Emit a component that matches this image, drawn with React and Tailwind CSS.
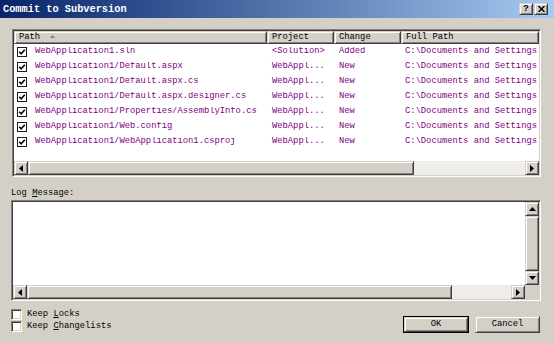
import React from "react";

const raised =
  "border border-t-[#d4d0c8] border-l-[#d4d0c8] border-r-[#404040] border-b-[#404040] shadow-[inset_1px_1px_#ffffff,inset_-1px_-1px_#808080] bg-[#d4d0c8]";
const sunken =
  "border border-t-[#808080] border-l-[#808080] border-r-[#ffffff] border-b-[#ffffff] shadow-[inset_1px_1px_#404040,inset_-1px_-1px_#d4d0c8]";

function Arrow({ dir }) {
  const pts = {
    left: "4,0 4,7 0,3.5",
    right: "0,0 0,7 4,3.5",
    up: "0,4 7,4 3.5,0",
    down: "0,0 7,0 3.5,4",
  }[dir];
  const horiz = dir === "left" || dir === "right";
  return (
    <svg width={horiz ? 4 : 7} height={horiz ? 7 : 4} viewBox={horiz ? "0 0 4 7" : "0 0 7 4"}>
      <polygon points={pts} fill="#000" />
    </svg>
  );
}

function ArrowBtn({ dir }) {
  return (
    <div className={`w-[14px] h-[14px] shrink-0 flex items-center justify-center ${raised}`}>
      <Arrow dir={dir} />
    </div>
  );
}

function HScroll({ thumb }) {
  return (
    <div className="h-[14px] flex">
      <ArrowBtn dir="left" />
      <div className={`h-[14px] ${raised}`} style={{ width: thumb }} />
      <div className="flex-1 bg-[#eeede9]" />
      <ArrowBtn dir="right" />
    </div>
  );
}

function ListCheck() {
  return (
    <svg width="10" height="10" viewBox="0 0 10 10" className="shrink-0">
      <rect x="0.5" y="0.5" width="9" height="9" fill="#fff" stroke="#1a1a1a" />
      <path d="M2.2 4.8 L4.2 6.8 L7.8 2.8" fill="none" stroke="#000" strokeWidth="1.6" />
    </svg>
  );
}

const rows = [
  ["WebApplication1.sln", "<Solution>", "Added"],
  ["WebApplication1/Default.aspx", "WebAppl...", "New"],
  ["WebApplication1/Default.aspx.cs", "WebAppl...", "New"],
  ["WebApplication1/Default.aspx.designer.cs", "WebAppl...", "New"],
  ["WebApplication1/Properties/AssemblyInfo.cs", "WebAppl...", "New"],
  ["WebApplication1/Web.config", "WebAppl...", "New"],
  ["WebApplication1/WebApplication1.csproj", "WebAppl...", "New"],
];

function HeaderCell({ w, children, grow }) {
  return (
    <div
      className={`h-[13px] flex items-center pl-[4px] overflow-hidden whitespace-nowrap ${raised} ${grow ? "flex-1" : ""}`}
      style={grow ? undefined : { width: w }}
    >
      {children}
    </div>
  );
}

export default function App() {
  return (
    <div className="w-[554px] h-[343px] bg-[#d4d0c8] flex flex-col overflow-hidden font-['Liberation_Mono',monospace] text-[8.8px] leading-none text-black">
      {/* Title bar */}
      <div className="h-[18px] shrink-0 flex items-center bg-gradient-to-r from-[#0a246a] to-[#a6caf0] pl-[3px] pr-[6px]">
        <div className="flex-1 text-white font-bold text-[10.3px]">Commit to Subversion</div>
        <div className="flex gap-[1px]">
          <div className={`w-[14px] h-[12px] flex items-center justify-center font-bold text-[9px] ${raised}`}>?</div>
          <div className={`w-[14px] h-[12px] flex items-center justify-center ${raised}`}>
            <svg width="7" height="6" viewBox="0 0 7 6">
              <path d="M0.5 0 L6.5 6 M6.5 0 L0.5 6" stroke="#000" strokeWidth="1.5" />
            </svg>
          </div>
        </div>
      </div>

      {/* File list */}
      <div className="mt-[11px] ml-[12px] mr-[13px] h-[148px] shrink-0">
        <div className={`h-full flex flex-col bg-white ${sunken}`}>
          <div className="m-[1px] flex flex-col h-[144px]">
            <div className="flex h-[13px]">
              <HeaderCell w={253}>
                <span>Path</span>
                <svg width="5" height="3" viewBox="0 0 5 3" className="ml-[10px] mb-[3px]">
                  <polygon points="0,3 5,3 2.5,0" fill="#808080" />
                </svg>
              </HeaderCell>
              <HeaderCell w={67}>Project</HeaderCell>
              <HeaderCell w={67}>Change</HeaderCell>
              <HeaderCell grow>Full Path</HeaderCell>
            </div>
            {rows.map((r, i) => (
              <div key={i} className="flex h-[15px] items-center text-[#800080] whitespace-nowrap">
                <div className="w-[253px] flex items-center pl-[3px] gap-[8px] overflow-hidden">
                  <ListCheck />
                  <span>{r[0]}</span>
                </div>
                <div className="w-[67px] pl-[5px] overflow-hidden">{r[1]}</div>
                <div className="w-[67px] pl-[5px] overflow-hidden">{r[2]}</div>
                <div className="flex-1 pl-[4px] overflow-hidden">C:\Documents and Settings</div>
              </div>
            ))}
            <div className="flex-1" />
            <HScroll thumb={386} />
          </div>
        </div>
      </div>

      {/* Log message label */}
      <div className="h-[23px] shrink-0 pl-[11px] pt-[10px] leading-[12px]">
        Log <span className="underline">M</span>essage:
      </div>

      {/* Log message box */}
      <div className="ml-[11px] mr-[13px] h-[101px] shrink-0">
        <div className={`h-full bg-white ${sunken}`}>
          <div className="m-[1px] h-[97px] flex flex-col">
            <div className="flex flex-1">
              <div className="flex-1" />
              <div className="w-[14px] flex flex-col bg-[#eeede9]">
                <ArrowBtn dir="up" />
                <div className={`flex-1 ${raised}`} />
                <ArrowBtn dir="down" />
              </div>
            </div>
            <div className="flex h-[14px]">
              <div className="flex-1">
                <HScroll thumb={425} />
              </div>
              <div className="w-[14px] bg-[#d4d0c8]" />
            </div>
          </div>
        </div>
      </div>

      {/* Bottom row */}
      <div className="flex justify-between pl-[11px] pr-[14px]">
        <div className="flex flex-col pt-[7px]">
          <div className="h-[12px] flex items-center gap-[5px]">
            <div className={`w-[11px] h-[11px] bg-white ${sunken}`} />
            <span>
              Keep <span className="underline">L</span>ocks
            </span>
          </div>
          <div className="h-[12px] flex items-center gap-[5px]">
            <div className={`w-[11px] h-[11px] bg-white ${sunken}`} />
            <span>
              Keep <span className="underline">C</span>hangelists
            </span>
          </div>
        </div>
        <div className="flex gap-[6px] pt-[15px]">
          <div className="w-[66px] h-[17px] border border-black">
            <div className={`w-full h-full flex items-center justify-center ${raised}`}>OK</div>
          </div>
          <div className={`w-[65px] h-[17px] flex items-center justify-center ${raised}`}>Cancel</div>
        </div>
      </div>
    </div>
  );
}
